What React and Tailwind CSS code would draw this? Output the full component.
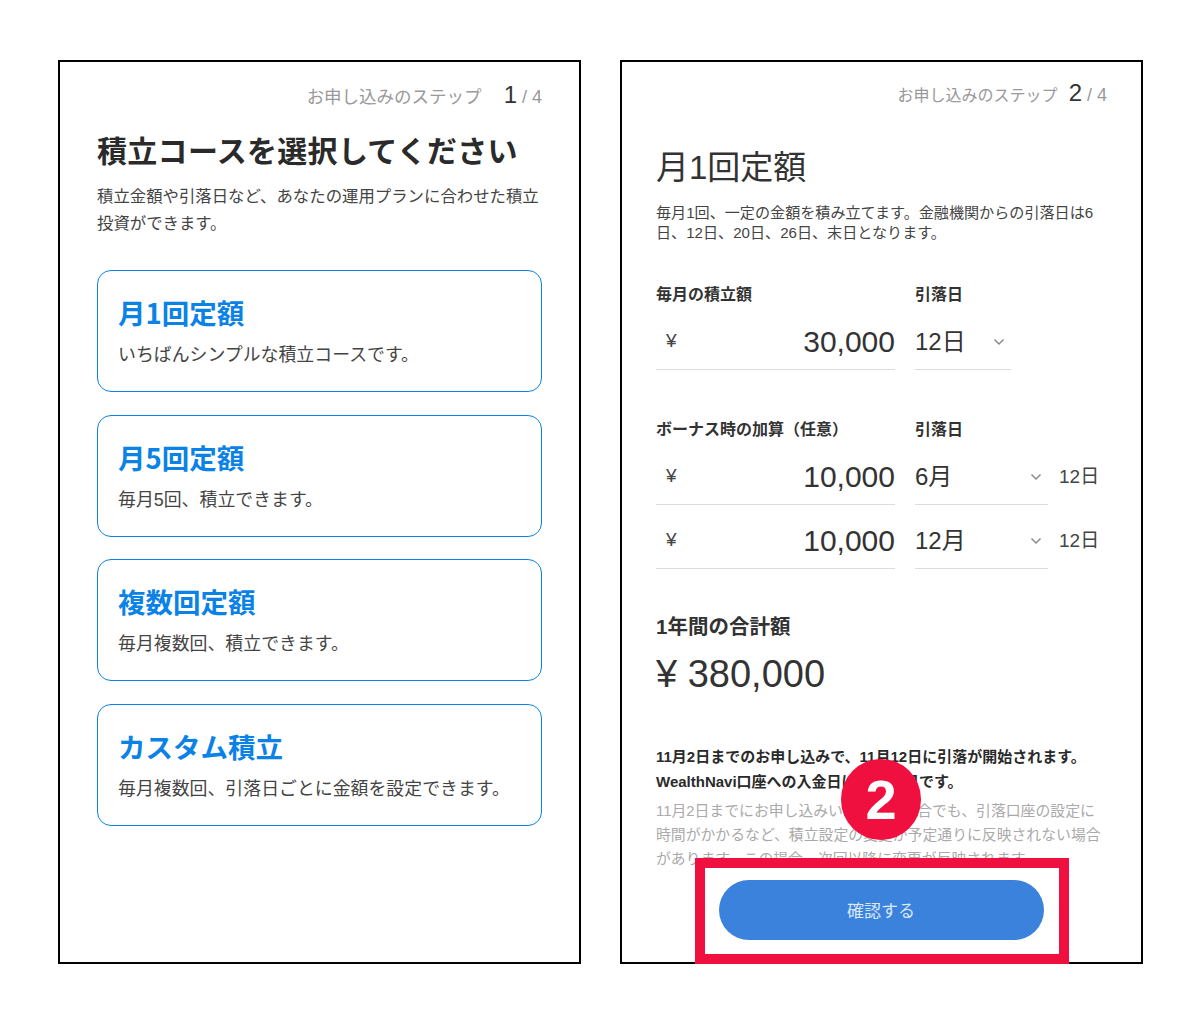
import React from "react";

function Chevron() {
  return (
    <svg width="12" height="8" viewBox="0 0 12 8" fill="none" stroke="#8a8a8a" strokeWidth="1.5" className="block">
      <path d="M1.5 1.5 L6 6 L10.5 1.5" />
    </svg>
  );
}

function Card({ title, desc }) {
  return (
    <div className="h-[122px] rounded-[14px] border-[1.5px] border-[#0b82e6] pl-[20px] pt-[22px]">
      <div className="font-['Noto_Sans_CJK_JP',sans-serif] text-[27.5px] leading-[38px] font-bold text-[#0b82e6]">{title}</div>
      <div className="mt-[5px] text-[17.9px] leading-[38px] text-[#444]">{desc}</div>
    </div>
  );
}

function AmountRow({ value, select, selectW, extra }) {
  return (
    <div className="flex items-stretch h-[63px]">
      <div className="w-[239px] flex items-center justify-between border-b border-[#dcdcdc] pl-[10px] pt-[7px]">
        <span className="text-[19px] text-[#444]">¥</span>
        <span className="text-[30px] text-[#333]">{value}</span>
      </div>
      <div className={`ml-[20px] flex items-center justify-between border-b border-[#dcdcdc] pr-[6px] pt-[7px] ${selectW}`}>
        <span className="text-[24px] text-[#333]">{select}</span>
        <Chevron />
      </div>
      {extra && <span className="ml-[11px] self-center pt-[7px] text-[19px] text-[#444]">{extra}</span>}
    </div>
  );
}

export default function App() {
  return (
    <div className="relative w-[1200px] h-[1020px] bg-white pt-[60px] pl-[58px] flex gap-[39px] font-['Liberation_Sans','Noto_Sans_CJK_JP',sans-serif]">
      <section className="w-[523px] h-[904px] border-2 border-black px-[37px]">
        <div className="flex justify-end items-baseline h-[42px] pt-[15px] text-[#999]">
          <span className="text-[17.5px]">お申し込みのステップ</span>
          <span className="ml-[22px] text-[24px] text-[#333]">1</span>
          <span className="ml-[5px] text-[18px]">/ 4</span>
        </div>
        <h1 className="mt-[26px] text-[30px] leading-[44px] font-bold tracking-[0.3px] text-[#2a2a2a]">積立コースを選択してください</h1>
        <p className="mt-[9px] text-[16.4px] leading-[27px] text-[#444]">積立金額や引落日など、あなたの運用プランに合わせた積立投資ができます。</p>
        <div className="mt-[33px] flex flex-col gap-[22.5px]">
          <Card title="月1回定額" desc="いちばんシンプルな積立コースです。" />
          <Card title="月5回定額" desc="毎月5回、積立できます。" />
          <Card title="複数回定額" desc="毎月複数回、積立できます。" />
          <Card title="カスタム積立" desc="毎月複数回、引落日ごとに金額を設定できます。" />
        </div>
      </section>

      <section className="w-[523px] h-[904px] border-2 border-black pl-[34px] pr-[33px] overflow-hidden">
        <div className="flex justify-end items-baseline h-[42px] pt-[13px] pr-[1px] text-[#999]">
          <span className="text-[16px]">お申し込みのステップ</span>
          <span className="ml-[11px] text-[24px] font-medium text-[#333]">2</span>
          <span className="ml-[5px] text-[18px]">/ 4</span>
        </div>
        <h2 className="mt-[41px] text-[33px] leading-[46px] text-[#333]">月1回定額</h2>
        <p className="mt-[12px] text-[15.1px] leading-[20px] text-[#444]">毎月1回、一定の金額を積み立てます。金融機関からの引落日は6日、12日、20日、26日、末日となります。</p>

        <div className="mt-[40px] flex text-[16px] leading-[24px] font-bold text-[#333]">
          <span className="w-[259px]">毎月の積立額</span>
          <span>引落日</span>
        </div>
        <AmountRow value="30,000" select="12日" selectW="w-[96px]" />

        <div className="mt-[48px] flex text-[16px] leading-[24px] font-bold text-[#333]">
          <span className="w-[259px]">ボーナス時の加算（任意）</span>
          <span>引落日</span>
        </div>
        <AmountRow value="10,000" select="6月" selectW="w-[133px]" extra="12日" />
        <div className="mt-[1px]">
          <AmountRow value="10,000" select="12月" selectW="w-[133px]" extra="12日" />
        </div>

        <div className="mt-[43px] text-[20.5px] leading-[30px] font-bold text-[#333]">1年間の合計額</div>
        <div className="mt-[7px] text-[38px] leading-[50px] text-[#333]">¥ 380,000</div>

        <p className="mt-[46px] text-[15px] leading-[24.5px] font-bold text-[#2a2a2a]">
          11月2日までのお申し込みで、11月12日に引落が開始されます。<br />WealthNavi口座への入金日は11月20日です。
        </p>
        <p className="mt-[5px] text-[14.85px] leading-[24px] text-[#aaa]">
          11月2日までにお申し込みいただいた場合でも、引落口座の設定に時間がかかるなど、積立設定の変更が予定通りに反映されない場合があります。この場合、次回以降に変更が反映されます。
        </p>
      </section>

      <div className="absolute left-[695px] top-[858px] w-[374px] h-[106px] border-[10px] border-[#f0103f] bg-white flex items-center justify-center">
        <button className="w-[325px] h-[60px] mb-[2px] mr-[2px] pt-[3px] rounded-full bg-[#3b82dc] text-[17px] text-[#dbe8f8]">確認する</button>
      </div>
      <div className="absolute left-[841px] top-[759px] w-[80px] h-[81px] rounded-full bg-[#f0103f] flex items-center justify-center text-white text-[56px] font-bold leading-none">2</div>
    </div>
  );
}
